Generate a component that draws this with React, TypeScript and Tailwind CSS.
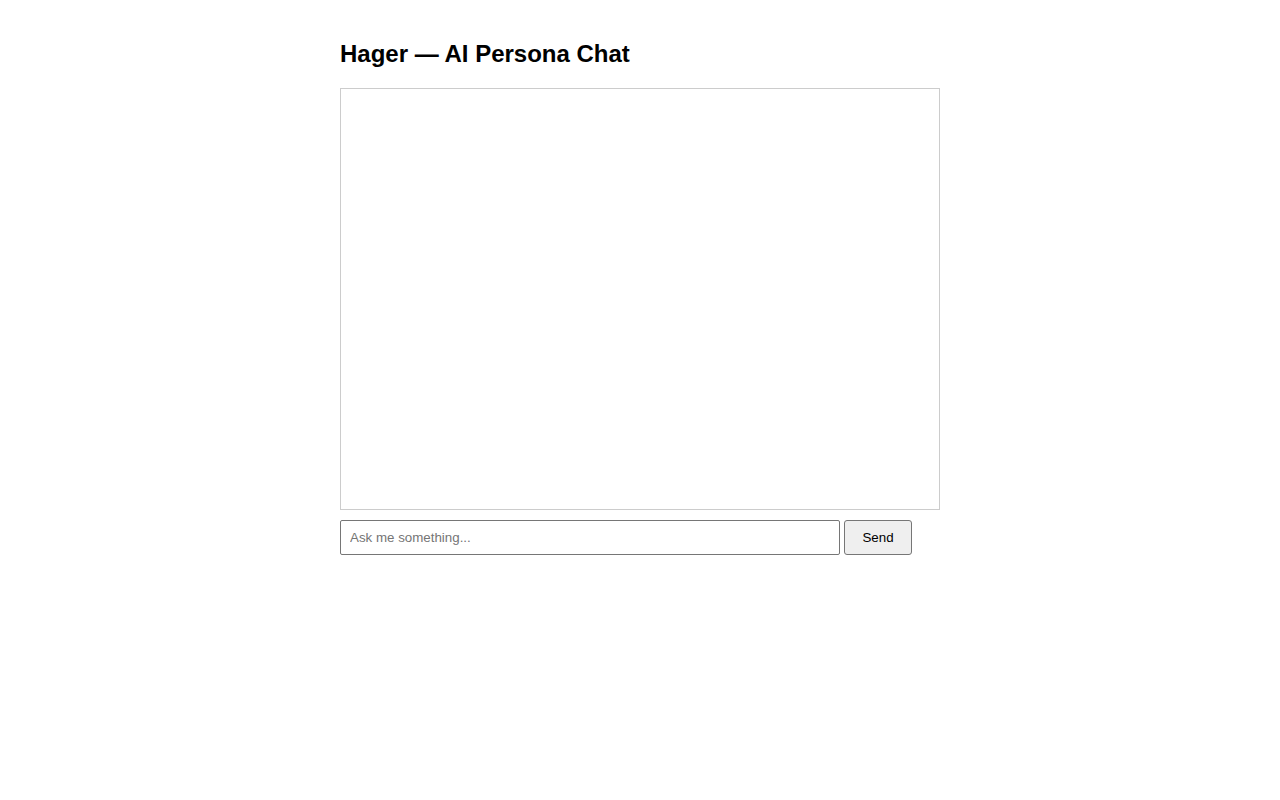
import React, { useState } from "react";

export default function App() {
    const [text, setText] = useState("");

    return (
        <div className="min-h-screen bg-white font-['Liberation_Sans',Arial,sans-serif] text-black">
            <div className="mx-auto w-[600px] pt-10">
                <h2 className="mb-5 text-2xl font-bold leading-[normal]">Hager — AI Persona Chat</h2>
                <div className="h-[422px] overflow-y-auto border border-[#ccc] p-[10px]"></div>
                <div className="mt-[10px] flex gap-1">
                    <input
                        type="text"
                        value={text}
                        onChange={(e) => setText(e.target.value)}
                        placeholder="Ask me something..."
                        className="h-[35px] w-[500px] rounded-[2px] border border-[#767676] px-[9px] text-[13.33px] placeholder:text-[#757575] outline-none"
                    />
                    <button className="h-[35px] w-[68px] rounded-[3px] border border-[#767676] bg-[#efefef] text-[13.33px]">
                        Send
                    </button>
                </div>
            </div>
        </div>
    );
}
